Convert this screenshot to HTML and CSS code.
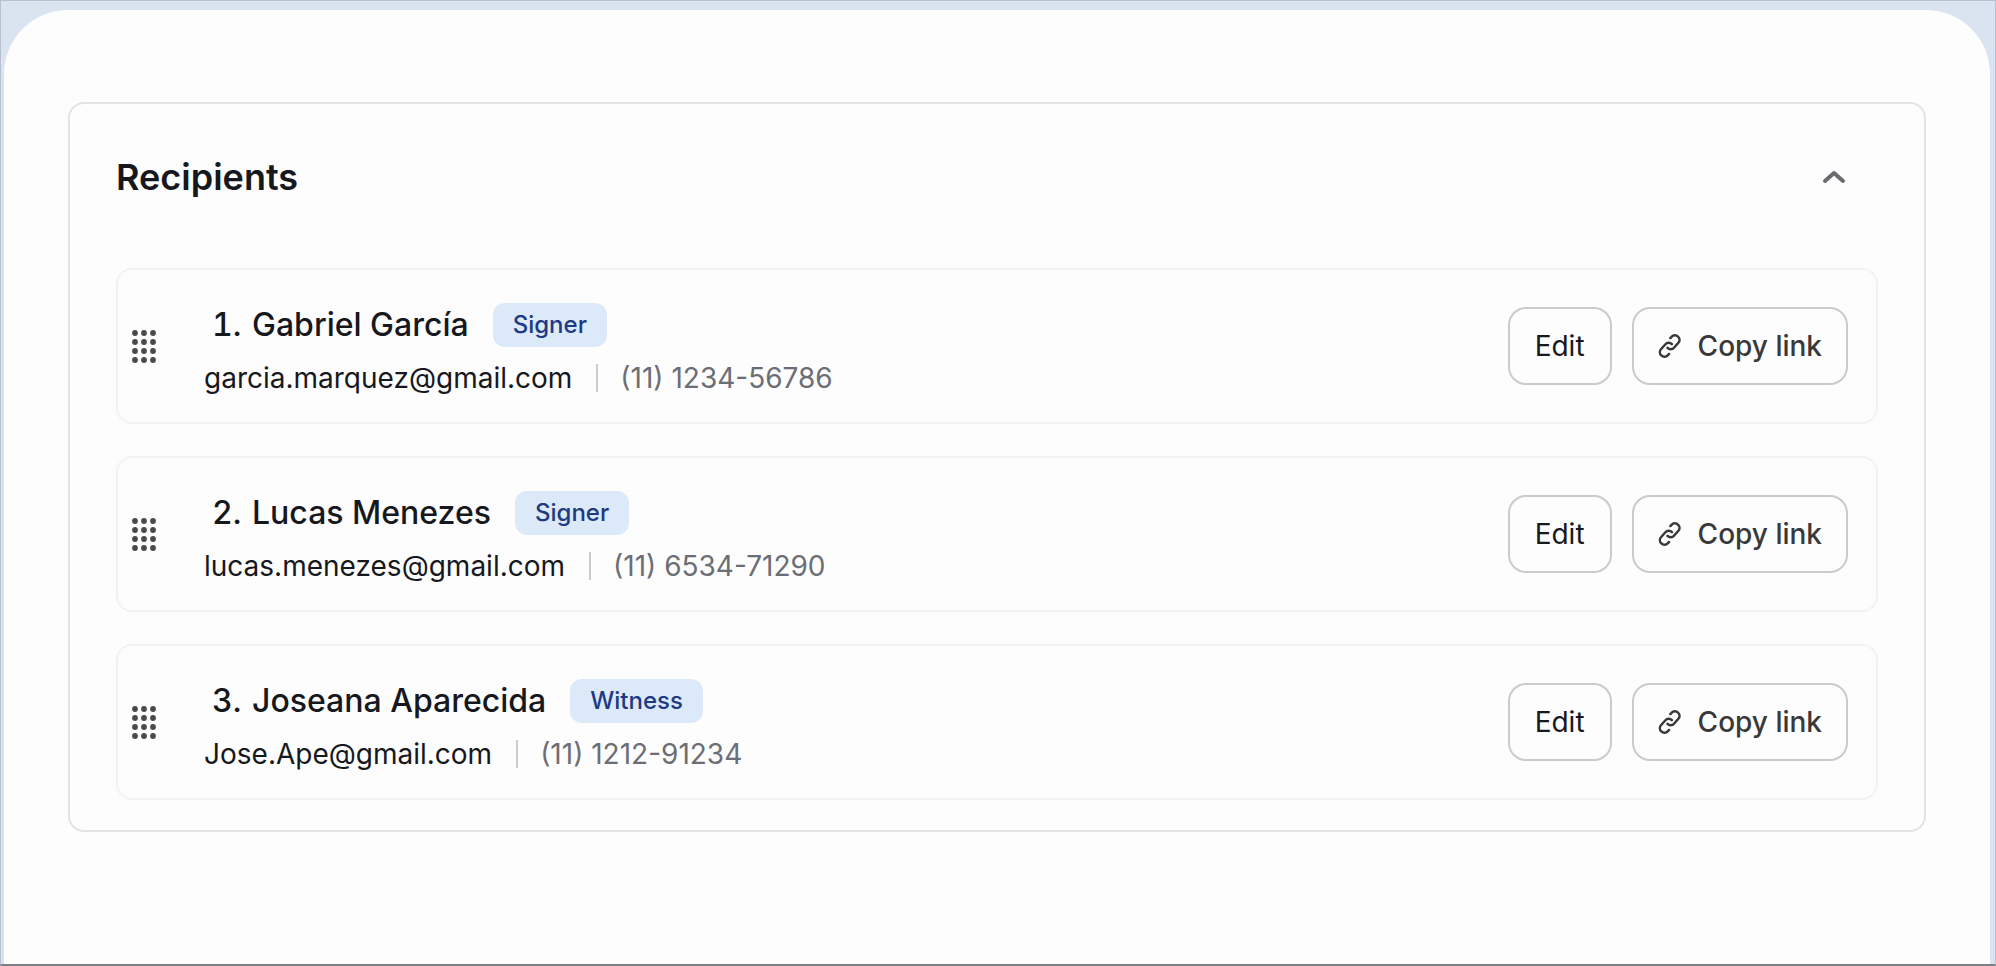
FILE: index.html
```
<!DOCTYPE html>
<html lang="en">
<head>
    <meta charset="UTF-8">
    <meta name="viewport" content="width=device-width, initial-scale=1.0">
    <title>Recipients</title>
    <link rel="stylesheet" href="styles.css">
</head>
<body>
    <svg class="sprite" aria-hidden="true">
        <symbol id="icon-grip" viewBox="0 0 24 33">
            <g fill="currentColor">
                <circle cx="3" cy="3" r="2.9"/><circle cx="12" cy="3" r="2.9"/><circle cx="21" cy="3" r="2.9"/>
                <circle cx="3" cy="12" r="2.9"/><circle cx="12" cy="12" r="2.9"/><circle cx="21" cy="12" r="2.9"/>
                <circle cx="3" cy="21" r="2.9"/><circle cx="12" cy="21" r="2.9"/><circle cx="21" cy="21" r="2.9"/>
                <circle cx="3" cy="30" r="2.9"/><circle cx="12" cy="30" r="2.9"/><circle cx="21" cy="30" r="2.9"/>
            </g>
        </symbol>
        <symbol id="icon-link" viewBox="0 0 24 24">
            <g fill="none" stroke="currentColor" stroke-width="2.5" stroke-linecap="round">
                <path d="M12.4 4l1.2-1.2a4.3 4.3 0 0 1 6.4-.2a4.4 4.4 0 0 1 .4 6.2l-4.4 4.9a4.3 4.3 0 0 1-6.5.2"/>
                <path d="M11 20l-1.2 1.2a4.3 4.3 0 0 1-6.4.2a4.4 4.4 0 0 1-.4-6.2l4.4-4.9a4.3 4.3 0 0 1 6.5-.2"/>
            </g>
        </symbol>
    </svg>

    <main class="sheet">
        <section class="card">
            <header class="card-header">
                <h1>Recipients</h1>
                <button class="toggle" type="button" aria-label="Collapse recipients" aria-expanded="true">
                    <svg width="24" height="14" viewBox="0 0 24 14"><path d="M3 11l9-8 9 8" fill="none" stroke="currentColor" stroke-width="4" stroke-linecap="round" stroke-linejoin="round"/></svg>
                </button>
            </header>

            <ul class="recipients">
                <li class="recipient">
                    <svg class="grip"><use href="#icon-grip"/></svg>
                    <div class="info">
                        <div class="title">
                            <h2><span class="number">1.</span>Gabriel García</h2>
                            <span class="badge">Signer</span>
                        </div>
                        <div class="contact">
                            <span class="email">garcia.marquez@gmail.com</span>
                            <span class="phone">(11) 1234-56786</span>
                        </div>
                    </div>
                    <div class="actions">
                        <button class="btn btn-edit" type="button">Edit</button>
                        <button class="btn btn-copy" type="button"><svg class="link-icon"><use href="#icon-link"/></svg>Copy link</button>
                    </div>
                </li>
                <li class="recipient">
                    <svg class="grip"><use href="#icon-grip"/></svg>
                    <div class="info">
                        <div class="title">
                            <h2><span class="number">2.</span>Lucas Menezes</h2>
                            <span class="badge">Signer</span>
                        </div>
                        <div class="contact">
                            <span class="email">lucas.menezes@gmail.com</span>
                            <span class="phone">(11) 6534-71290</span>
                        </div>
                    </div>
                    <div class="actions">
                        <button class="btn btn-edit" type="button">Edit</button>
                        <button class="btn btn-copy" type="button"><svg class="link-icon"><use href="#icon-link"/></svg>Copy link</button>
                    </div>
                </li>
                <li class="recipient">
                    <svg class="grip"><use href="#icon-grip"/></svg>
                    <div class="info">
                        <div class="title">
                            <h2><span class="number">3.</span>Joseana Aparecida</h2>
                            <span class="badge">Witness</span>
                        </div>
                        <div class="contact">
                            <span class="email">Jose.Ape@gmail.com</span>
                            <span class="phone">(11) 1212-91234</span>
                        </div>
                    </div>
                    <div class="actions">
                        <button class="btn btn-edit" type="button">Edit</button>
                        <button class="btn btn-copy" type="button"><svg class="link-icon"><use href="#icon-link"/></svg>Copy link</button>
                    </div>
                </li>
            </ul>
        </section>
    </main>
</body>
</html>
```
FILE: styles.css
```
* {
    box-sizing: border-box;
}
body {
    display: flex;
    min-height: 100vh;
    margin: 0;
    padding: 9px 5px 0 3px;
    border: 1px solid #b9c0d0;
    border-bottom: 2px solid #7c7e86;
    background-color: #dae3f0;
    color: #16181d;
    font-family: 'Inter', sans-serif;
}
h1, h2 {
    margin: 0;
}
button {
    font-family: inherit;
    cursor: pointer;
}
.sprite {
    display: none;
}
.sheet {
    flex: 1;
    padding: 92px 64px;
    border-radius: 64px 64px 0 0;
    background-color: #fdfdfd;
}
.card {
    padding: 46px 46px 30px;
    border: 2px solid #e2e3e5;
    border-radius: 16px;
}
.card-header {
    display: flex;
    align-items: center;
    justify-content: space-between;
    padding-right: 20px;
    margin-bottom: 64px;
}
.card-header h1 {
    font-size: 36px;
    font-weight: 600;
    line-height: 54px;
}
.toggle {
    display: flex;
    padding: 12px;
    border: none;
    background: none;
    color: #6a6b70;
}
.recipients {
    display: flex;
    flex-direction: column;
    gap: 32px;
    margin: 0;
    padding: 0;
    list-style: none;
}
.recipient {
    display: flex;
    align-items: center;
    padding: 0 28px 0 14px;
    border: 2px solid #f2f2f3;
    border-radius: 16px;
}
.grip {
    width: 24px;
    height: 33px;
    margin-right: 48px;
    color: #4a4a4c;
}
.info {
    flex: 1;
    padding: 30px 0 24px;
}
.title {
    display: flex;
    align-items: center;
    gap: 24px;
    padding-left: 8px;
}
.title h2 {
    display: flex;
    font-size: 32px;
    font-weight: 500;
    line-height: 50px;
}
.number {
    width: 40px;
    font-variant-numeric: tabular-nums;
}
.badge {
    padding: 0 20px;
    border-radius: 12px;
    background-color: #dce9f9;
    color: #1e3a84;
    font-size: 24px;
    font-weight: 500;
    line-height: 44px;
}
.contact {
    display: flex;
    align-items: center;
    gap: 24px;
    padding-top: 8px;
    font-size: 28px;
    line-height: 40px;
}
.phone {
    padding-left: 22px;
    border-left: 2px solid #cccdd1;
    color: #6c6e75;
    line-height: 28px;
}
.actions {
    display: flex;
    gap: 20px;
}
.btn {
    display: flex;
    align-items: center;
    justify-content: center;
    gap: 16px;
    min-width: 104px;
    height: 78px;
    padding: 0 24px;
    border: 2px solid #cacbce;
    border-radius: 18px;
    background-color: transparent;
    color: #16181d;
    font-size: 28px;
    font-weight: 400;
}
.btn-copy {
    color: #39393b;
    font-weight: 500;
}
.link-icon {
    width: 24px;
    height: 24px;
}
```
